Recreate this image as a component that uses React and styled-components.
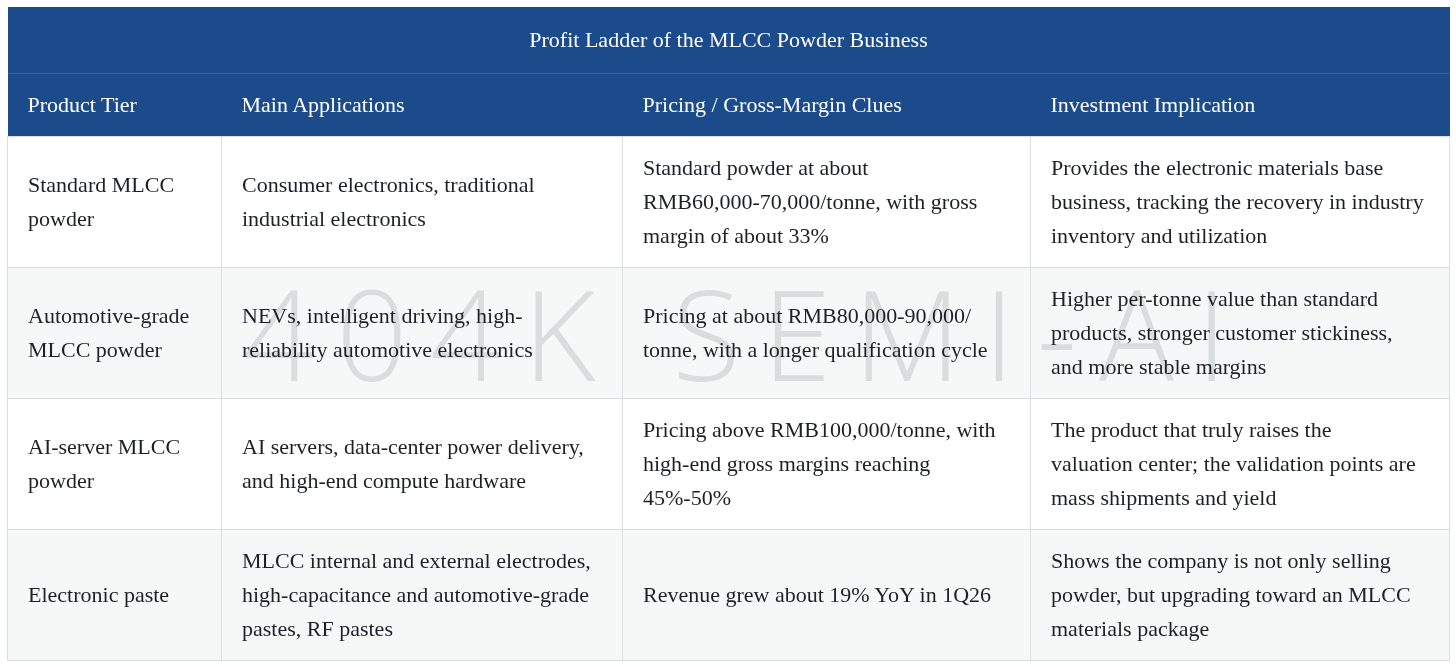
import React from "react";
import styled, { createGlobalStyle } from "styled-components";

const Global = createGlobalStyle`
  html, body { margin: 0; padding: 0; background: #ffffff; }
  body { font-family: "Liberation Serif", "Times New Roman", serif; }
`;

const Page = styled.div`
  padding: 7px;
`;

const Frame = styled.div`
  position: relative;
  width: 1442px;
`;

const Table = styled.table`
  width: 1442px;
  border-collapse: collapse;
  table-layout: fixed;
  font-family: "Liberation Serif", "Times New Roman", serif;
`;

const TitleCell = styled.th`
  background: #1b4b8a;
  color: #ffffff;
  font-weight: 400;
  font-size: 22px;
  height: 66px;
  padding: 0;
  text-align: center;
  border-bottom: 1px solid #3563a0;
`;

const HeadCell = styled.th`
  background: #1b4b8a;
  color: #ffffff;
  font-weight: 400;
  font-size: 22px;
  text-align: left;
  height: 62px;
  padding: 0 20px;
  white-space: nowrap;
`;

const Row = styled.tr`
  background: ${(p) => (p.$alt ? "#f6f8f8" : "#ffffff")};
`;

const Cell = styled.td`
  border: 1px solid #dcdfe1;
  padding: 14px 20px;
  font-size: 22px;
  line-height: 34px;
  color: #1e2029;
  vertical-align: middle;
  height: 102px;
  white-space: nowrap;
`;

const Watermark = styled.div`
  position: absolute;
  left: 236px;
  top: 263px;
  font-family: "Open Sans", "Liberation Sans", sans-serif;
  font-weight: 300;
  font-size: 125px;
  line-height: 1;
  letter-spacing: 22px;
  color: #e2e4e4;
  mix-blend-mode: multiply;
  pointer-events: none;
  white-space: nowrap;
`;

const cols = [214, 401, 408, 419];

const rows = [
  [
    ["Standard MLCC", "powder"],
    ["Consumer electronics, traditional", "industrial electronics"],
    ["Standard powder at about", "RMB60,000-70,000/tonne, with gross", "margin of about 33%"],
    [
      "Provides the electronic materials base",
      "business, tracking the recovery in industry",
      "inventory and utilization",
    ],
  ],
  [
    ["Automotive-grade", "MLCC powder"],
    ["NEVs, intelligent driving, high-", "reliability automotive electronics"],
    ["Pricing at about RMB80,000-90,000/", "tonne, with a longer qualification cycle"],
    [
      "Higher per-tonne value than standard",
      "products, stronger customer stickiness,",
      "and more stable margins",
    ],
  ],
  [
    ["AI-server MLCC", "powder"],
    ["AI servers, data-center power delivery,", "and high-end compute hardware"],
    ["Pricing above RMB100,000/tonne, with", "high-end gross margins reaching", "45%-50%"],
    [
      "The product that truly raises the",
      "valuation center; the validation points are",
      "mass shipments and yield",
    ],
  ],
  [
    ["Electronic paste"],
    [
      "MLCC internal and external electrodes,",
      "high-capacitance and automotive-grade",
      "pastes, RF pastes",
    ],
    ["Revenue grew about 19% YoY in 1Q26"],
    [
      "Shows the company is not only selling",
      "powder, but upgrading toward an MLCC",
      "materials package",
    ],
  ],
];

function Lines({ lines }) {
  return lines.map((l, k) => (
    <React.Fragment key={k}>
      {k > 0 && <br />}
      {l}
    </React.Fragment>
  ));
}

export default function App() {
  return (
    <Page>
      <Global />
      <Frame>
        <Table>
          <colgroup>
            {cols.map((w, i) => (
              <col key={i} style={{ width: w }} />
            ))}
          </colgroup>
          <thead>
            <tr>
              <TitleCell colSpan={4}>Profit Ladder of the MLCC Powder Business</TitleCell>
            </tr>
            <tr>
              <HeadCell>Product Tier</HeadCell>
              <HeadCell>Main Applications</HeadCell>
              <HeadCell>Pricing / Gross-Margin Clues</HeadCell>
              <HeadCell>Investment Implication</HeadCell>
            </tr>
          </thead>
          <tbody>
            {rows.map((r, i) => (
              <Row key={i} $alt={i % 2 === 1}>
                {r.map((c, j) => (
                  <Cell key={j}>
                    <Lines lines={c} />
                  </Cell>
                ))}
              </Row>
            ))}
          </tbody>
        </Table>
        <Watermark>404K SEMI-AI</Watermark>
      </Frame>
    </Page>
  );
}
